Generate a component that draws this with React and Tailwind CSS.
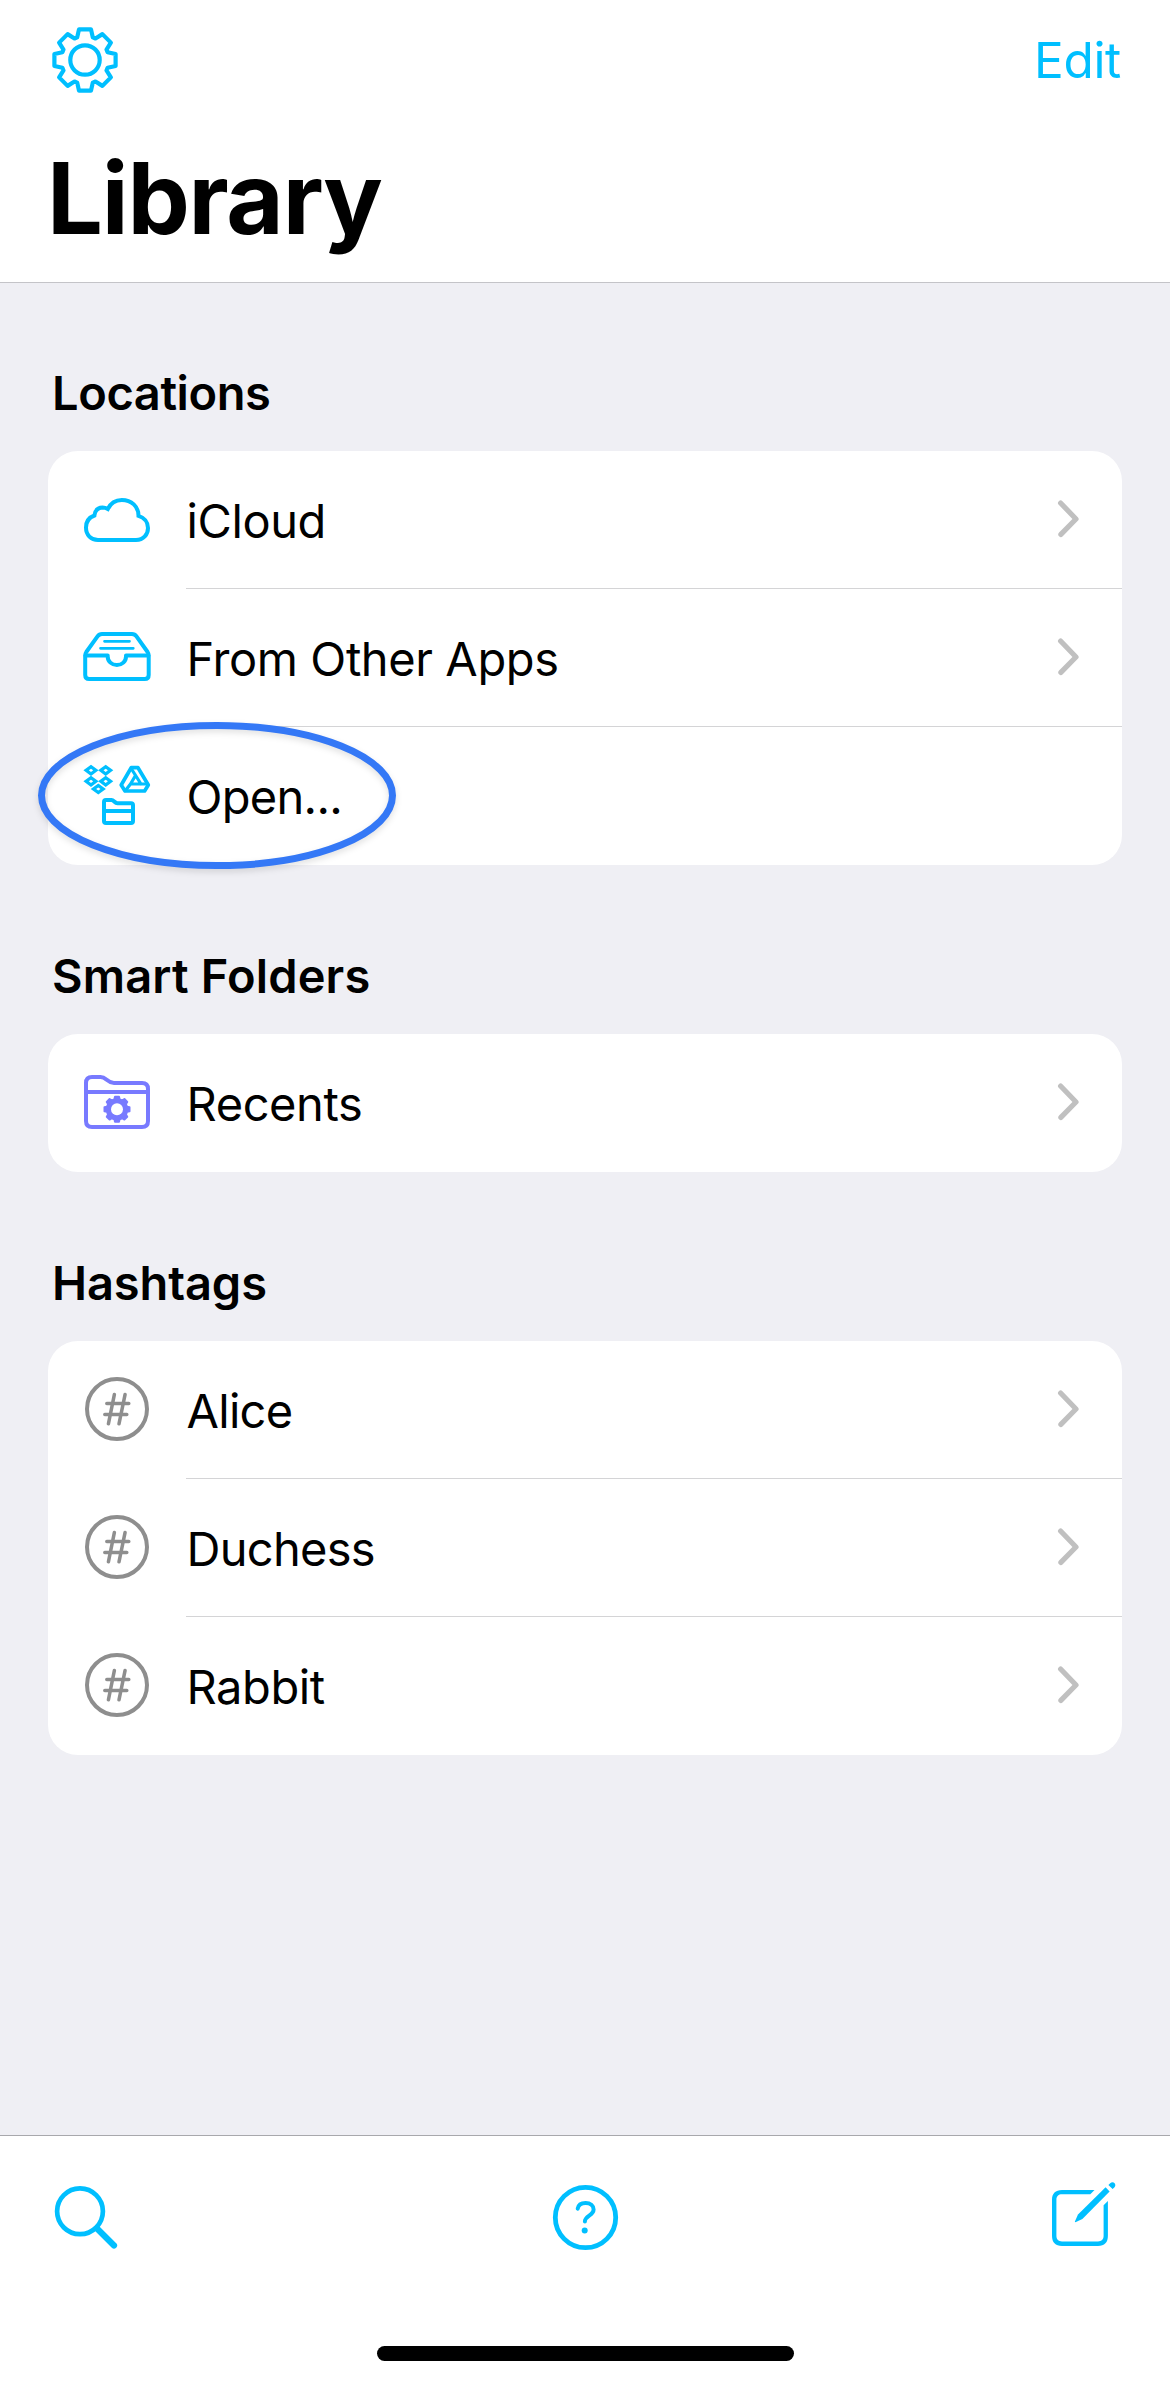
import React from 'react';

// Outline of an eight-tooth gear, centred on cx, cy
const gearPath = (cx, cy, tip, tipHalf, base, baseHalf) => {
  const points = [];
  for (let i = 0; i < 8; i++) {
    const a = (i * Math.PI) / 4;
    [[base, -baseHalf], [tip, -tipHalf], [tip, tipHalf], [base, baseHalf]].forEach(([r, t]) => {
      const x = cx + r * Math.sin(a) + t * Math.cos(a);
      const y = cy - r * Math.cos(a) + t * Math.sin(a);
      points.push(`${x.toFixed(2)} ${y.toFixed(2)}`);
    });
  }
  return `M${points.join('L')}Z`;
};

const iconProps = {
  width: 72,
  height: 72,
  viewBox: '0 0 72 72',
  fill: 'none',
  stroke: 'currentColor',
  strokeWidth: 4,
  strokeLinecap: 'round',
  strokeLinejoin: 'round',
};

const GearIcon = () => (
  <svg {...iconProps}>
    <path d={gearPath(36, 36, 30.6, 6, 22.6, 7.8)} strokeWidth="4.2" />
    <circle cx="36" cy="36" r="14.7" strokeWidth="4.2" />
  </svg>
);

const CloudIcon = () => (
  <svg {...iconProps} strokeLinejoin="miter">
    <path d="M17 56H55C62.5 56 67 50.5 67 44C67 38 63 33.5 57.5 31.8C57.5 22.5 50.5 16 40.8 16C34.5 16 29.5 19.5 26.8 25C25 24 23 23.6 21.5 23.6C17 23.8 14 26.5 13.4 31.5C8 33.5 5 38 5 43.5C5 51 10 56 17 56Z" />
  </svg>
);

const TrayIcon = () => (
  <svg {...iconProps}>
    <path d="M4.2 33.4C4.2 32 4.5 31.2 5.3 30L16.5 14.4C17.7 12.7 19 12 21 12H51C53 12 54.3 12.7 55.5 14.4L66.6 30C67.4 31.2 67.7 32 67.7 33.4V53C67.7 55.6 66.3 57 63.7 57H8.2C5.6 57 4.2 55.6 4.2 53Z" />
    <path d="M4.5 33.4H26.7V34.5C26.7 39.5 30.8 43 35.9 43C41 43 45 39.5 45 34.5V33.4H67.4" />
    <path d="M23.5 19.3H48.5M19.5 26.3H52.3" strokeWidth="2.7" />
  </svg>
);

const diamonds = [[10, 10.3], [24.7, 10.3], [10, 21.3], [24.7, 21.3], [17.3, 29]];

const OpenIcon = () => (
  <svg {...iconProps}>
    {diamonds.map(([x, y]) => (
      <path
        key={`${x}-${y}`}
        d={`M${x - 7.6} ${y}l7.6 -5.6l7.6 5.6l-7.6 5.6zM${x - 2.2} ${y}l2.2 1.6l2.2 -1.6l-2.2 -1.6z`}
        fill="currentColor"
        fillRule="evenodd"
        stroke="none"
      />
    ))}
    <path d="M50.2 7.7H57L67.3 25L63.6 31H44L40.2 25Z" strokeWidth="3.7" />
    <path d="M50.2 8.5L60 24M66.5 24H49.5L44.5 30.5M49.5 24L54.5 15.5" strokeWidth="3.2" />
    <path d="M23 61V42C23 40.7 23.7 40 25 40H30.5C33 40 33.5 43.2 36.5 43.2H50C51.3 43.2 52 43.8 52 45V61C52 62.3 51.3 63 50 63H25C23.7 63 23 62.3 23 61ZM23 51H52" />
  </svg>
);

const SmartFolderIcon = () => (
  <svg {...iconProps}>
    <path d="M5 54V16C5 12 7 10 11 10H19.5C25.5 10 26 16 33 16H61C65 16 67 18 67 22V54C67 58 65 60 61 60H11C7 60 5 58 5 54ZM5 25H67" />
    <path d={gearPath(36, 42.3, 12.5, 2, 10, 2.6)} fill="currentColor" strokeWidth="2" />
    <circle cx="36" cy="42.3" r="6" fill="white" stroke="none" />
  </svg>
);

const HashIcon = () => (
  <svg {...iconProps}>
    <circle cx="36" cy="35" r="30" />
    <path d="M33.4 20.4L27.4 49.8M44.1 20.4L38 49.8M25.8 29.4H47.8M23.8 40.4H45.8" strokeWidth="3.5" />
  </svg>
);

const SearchIcon = () => (
  <svg {...iconProps}>
    <circle cx="31" cy="30.3" r="22.9" strokeWidth="4.7" />
    <path d="M48 47.5L65 64.5" strokeWidth="6.2" />
  </svg>
);

const HelpIcon = () => (
  <svg {...iconProps}>
    <circle cx="36.5" cy="36.5" r="30.2" strokeWidth="4.8" />
    <path d="M28.7 27.7C29.3 24.2 32.3 22 36.6 22C41.3 22 44.6 24.6 44.6 28.6C44.6 34.6 35.9 34.8 35.9 40.6" />
    <circle cx="35.7" cy="49.4" r="3" fill="currentColor" stroke="none" />
  </svg>
);

const ComposeIcon = () => (
  <svg {...iconProps}>
    <path d="M45.5 8.9L41.3 13.2H13C9.4 13.2 7.4 15.2 7.4 18.8V54.8C7.4 58.4 9.4 60.4 13 60.4H49C52.6 60.4 54.6 58.4 54.6 54.8V24.2L58.9 20V54.8C58.9 61.4 55.6 65 49 65H13C6.4 65 3 61.4 3 54.8V18.8C3 12.3 6.4 8.9 13 8.9Z" fill="currentColor" stroke="none" />
    <path d="M56.6 6.3L60.6 10.4L33.4 38L26.4 41.3L25.8 40.7L29 33.6Z" fill="currentColor" stroke="none" />
    <path d="M61.2 2.2C62.6 0.9 64.6 1 65.6 2.2C66.7 3.6 66.5 5.3 65.3 6.4L63.6 8L59.4 4Z" fill="currentColor" stroke="none" />
  </svg>
);

const Chevron = () => (
  <svg width="24" height="40" viewBox="0 0 24 40" fill="none" stroke="#c0c0c0" strokeWidth="5.2" strokeLinecap="round" strokeLinejoin="round">
    <path d="M4.6 3L20 19L4.9 34.4" />
  </svg>
);

const sections = [
  {
    title: 'Locations',
    titleClass: 'h-[168px] tracking-[-0.4px]',
    color: 'text-[#00bfff]',
    rows: [
      { label: 'iCloud', icon: <CloudIcon />, chevron: true },
      { label: 'From Other Apps', icon: <TrayIcon />, chevron: true },
      { label: 'Open...', icon: <OpenIcon />, tight: true, circled: true },
    ],
  },
  {
    title: 'Smart Folders',
    titleClass: 'h-[169px] tracking-[0.15px]',
    color: 'text-[#787aff]',
    rows: [{ label: 'Recents', icon: <SmartFolderIcon />, chevron: true }],
  },
  {
    title: 'Hashtags',
    titleClass: 'h-[169px] tracking-[-0.1px]',
    color: 'text-[#8e8e8e]',
    rows: [
      { label: 'Alice', icon: <HashIcon />, tight: true, chevron: true },
      { label: 'Duchess', icon: <HashIcon />, tight: true, chevron: true },
      { label: 'Rabbit', icon: <HashIcon />, chevron: true },
    ],
  },
];

const Row = ({ row, color, last }) => (
  <div className="relative flex h-[138px] items-center pl-[33px]">
    <div className={`mr-[33px] shrink-0 ${color}`}>{row.icon}</div>
    <div className={`flex h-full flex-1 items-center justify-between pr-[42px] ${last ? '' : 'border-b border-[#d4d4d6]'}`}>
      <span className={`pl-[0.5px] pt-[2px] text-[47px] leading-[60px] ${row.tight ? 'tracking-[-0.7px]' : 'tracking-[-0.4px]'}`}>
        {row.label}
      </span>
      {row.chevron && <Chevron />}
    </div>
    {row.circled && (
      <svg className="absolute -left-[24px] -top-[19px] drop-shadow-[0_3px_3px_rgba(0,0,0,0.12)]" width="386" height="174" viewBox="0 0 386 174" fill="none">
        <ellipse cx="193" cy="87.5" rx="175.5" ry="70" stroke="#3478f6" strokeWidth="7" />
      </svg>
    )}
  </div>
);

const App = () => {
  return (
    <div className="flex h-[2385px] w-[1170px] flex-col bg-[#efeff4] font-['Inter',sans-serif] text-black">
      {/* Header */}
      <header className="h-[283px] border-b border-[#c4c4c8] bg-white px-[49px] pt-[24px]">
        <div className="flex h-[72px] items-center justify-between text-[#00bfff]">
          <GearIcon />
          <button className="text-[49.5px] leading-[60px] tracking-[-0.3px]">Edit</button>
        </div>
        <h1 className="-ml-[2px] mt-[42px] text-[99px] font-bold leading-[120px] tracking-[-1.2px]">Library</h1>
      </header>

      {/* Sections */}
      <main className="flex-1 px-[48px]">
        {sections.map((section) => (
          <section key={section.title}>
            <h2 className={`flex items-end pb-[28px] pl-[4px] text-[47px] font-semibold leading-[60px] ${section.titleClass}`}>
              {section.title}
            </h2>
            <div className="rounded-[30px] bg-white">
              {section.rows.map((row, index) => (
                <Row key={row.label} row={row} color={section.color} last={index === section.rows.length - 1} />
              ))}
            </div>
          </section>
        ))}
      </main>

      {/* Toolbar */}
      <footer className="flex h-[250px] flex-col items-center justify-between border-t border-[#a8a8ac] bg-white px-[49px] pb-[24px] pt-[45px]">
        <div className="flex w-full items-center justify-between text-[#00bfff]">
          <SearchIcon />
          <HelpIcon />
          <ComposeIcon />
        </div>
        <div className="h-[15px] w-[417px] rounded-full bg-black"></div>
      </footer>
    </div>
  );
};

export default App;
